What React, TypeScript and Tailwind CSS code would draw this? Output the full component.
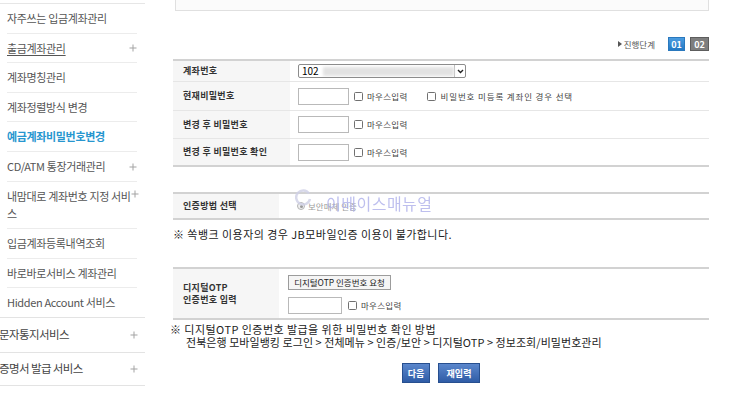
// 예금계좌비밀번호변경 — account password change screen
import React from 'react'

type MenuItem = {
  label: string[]
  h: string
  plus?: boolean
  active?: boolean
  underline?: boolean
}

const SUB_MENU: MenuItem[] = [
  { label: ['자주쓰는 입금계좌관리'], h: 'h-[30px]' },
  { label: ['출금계좌관리'], h: 'h-[29px]', plus: true, underline: true },
  { label: ['계좌명칭관리'], h: 'h-[30px]' },
  { label: ['계좌정렬방식 변경'], h: 'h-[29px]' },
  { label: ['예금계좌비밀번호변경'], h: 'h-[30px]', active: true },
  { label: ['CD/ATM 통장거래관리'], h: 'h-[30px]', plus: true },
  { label: ['내맘대로 계좌번호 지정 서비', '스'], h: 'h-[47px]', plus: true },
  { label: ['입금계좌등록내역조회'], h: 'h-[30px]' },
  { label: ['바로바로서비스 계좌관리'], h: 'h-[29px]' },
  { label: ['Hidden Account 서비스'], h: 'h-[29px]' },
]

const FONT = "font-['Noto_Sans_CJK_KR','Noto_Sans',sans-serif]"

function Plus() {
  return (
    <svg width="8" height="8" viewBox="0 0 8 8" className="shrink-0">
      <path d="M4 0.5v7M0.5 4h7" stroke="#a3a3a3" strokeWidth="1" />
    </svg>
  )
}

function Check() {
  return <span className="w-[9px] h-[9px] border border-[#707070] rounded-[1.5px] bg-white shrink-0" />
}

function MouseInput() {
  return (
    <div className="flex items-center gap-[4px]">
      <Check />
      <span className="text-[8.5px] text-[#444] leading-none tracking-[0.3px]">마우스입력</span>
    </div>
  )
}

function PwInput({ w = 'w-[51px]' }: { w?: string }) {
  return <div className={`${w} h-[17px] border border-[#b9b9b9] bg-white shrink-0`} />
}

function Sidebar() {
  return (
    <div className="w-[145px] shrink-0 pt-[3px]">
      <div className="border-t border-[#e6e6e6]">
        {SUB_MENU.map((m, i) => {
          const last = i === SUB_MENU.length - 1
          return (
            <div key={i} className={last ? 'border-b border-[#e3e3e3]' : ''}>
              <div
                className={`ml-[7px] mr-[8px] ${m.h} flex justify-between ${m.label.length > 1 ? 'items-start' : 'items-center'} ${last ? '' : 'border-b border-[#ececec]'}`}
              >
                <div
                  className={`text-[11px] leading-[17px] tracking-[-0.35px] ${m.label.length > 1 ? 'pt-[6px]' : ''} ${
                    m.active ? 'text-[#2796cf] font-semibold tracking-[-0.6px]' : 'text-[#555]'
                  } ${m.underline ? 'underline underline-offset-2' : ''}`}
                >
                  {m.label.map((l, j) => (
                    <div key={j} className="whitespace-nowrap">{l}</div>
                  ))}
                </div>
                {m.plus && (
                  <div className={m.label.length > 1 ? 'mt-[8px] -mr-px' : ''}>
                    <Plus />
                  </div>
                )}
              </div>
            </div>
          )
        })}
        <div className="h-[35px] flex items-center justify-between pr-[7px] border-b border-[#e3e3e3]">
          <span className="-ml-[1px] text-[11.5px] tracking-[-0.6px] text-[#444]">문자통지서비스</span>
          <Plus />
        </div>
        <div className="h-[33px] flex items-center justify-between pr-[7px] border-b border-[#e3e3e3]">
          <span className="-ml-[1px] text-[11.5px] tracking-[-0.6px] text-[#444]">증명서 발급 서비스</span>
          <Plus />
        </div>
      </div>
    </div>
  )
}

function Label({ children, w }: { children: React.ReactNode; w: string }) {
  return (
    <div className={`${w} shrink-0 bg-[#f6f6f6] pl-[10px] flex items-center text-[9px] font-bold text-[#333] tracking-[0.3px] leading-[12px]`}>
      {children}
    </div>
  )
}

export default function App() {
  return (
    <div className={`relative w-[730px] h-[399px] overflow-hidden bg-white flex ${FONT}`}>
      <Sidebar />

      <div className="ml-[28px] w-[536px] shrink-0 flex flex-col">
        {/* previous box remnant */}
        <div className="ml-[2px] w-[534px] h-[11px] border-x border-b border-[#e0e0e0] bg-[#fbfbfb]" />

        {/* 진행단계 */}
        <div className="mt-[26px] h-[14px] flex items-center justify-end">
          <svg width="4" height="6" viewBox="0 0 4 6" className="mr-[2px]">
            <path d="M0 0L4 3L0 6Z" fill="#555" />
          </svg>
          <span className="text-[8.5px] text-[#555] leading-none mr-[13px]">진행단계</span>
          <div className="w-[17px] h-[14px] bg-linear-to-b from-[#4a9ce0] to-[#2379c4] border border-[#2a78bd] text-white text-[9px] font-bold flex items-center justify-center leading-none">
            01
          </div>
          <div className="ml-[5px] w-[19px] h-[14px] bg-[#7e7e7e] border border-[#5d5d5d] text-white text-[9px] font-bold flex items-center justify-center leading-none">
            02
          </div>
        </div>

        {/* 계좌 비밀번호 입력 */}
        <div className="mt-[8px] border-t-2 border-b-2 border-[#d2d2d2]">
          <div className="h-[21px] flex border-b border-[#e6e6e6]">
            <Label w="w-[117px]">계좌번호</Label>
            <div className="flex-1 pl-[8px] flex items-center">
              <div className="w-[168px] h-[14px] border border-[#8c8c8c] rounded-[2px] bg-white flex items-center overflow-hidden">
                <span className="pl-[3px] text-[10px] leading-none text-black">102</span>
                <div className="ml-[4px] h-[9px] w-[133px] bg-[#e2e2e2] blur-[1.5px]" />
                <div className="ml-auto h-full w-[11px] flex items-center justify-center border-l border-[#bbb]">
                  <svg width="7" height="5" viewBox="0 0 7 5">
                    <path d="M1 1l2.5 2.5L6 1" stroke="#222" strokeWidth="1.4" fill="none" />
                  </svg>
                </div>
              </div>
            </div>
          </div>
          <div className="h-[29px] flex border-b border-[#e6e6e6]">
            <Label w="w-[117px]">현재비밀번호</Label>
            <div className="flex-1 pl-[8px] flex items-center gap-[5px]">
              <PwInput />
              <MouseInput />
              <div className="ml-[14px] flex items-center gap-[5px]">
                <Check />
                <span className="text-[8.5px] text-[#444] leading-none tracking-[0.85px]">비밀번호 미등록 계좌인 경우 선택</span>
              </div>
            </div>
          </div>
          <div className="h-[28px] flex border-b border-[#e6e6e6]">
            <Label w="w-[117px]">변경 후 비밀번호</Label>
            <div className="flex-1 pl-[8px] flex items-center gap-[5px]">
              <PwInput />
              <MouseInput />
            </div>
          </div>
          <div className="h-[26px] flex">
            <Label w="w-[117px]">변경 후 비밀번호 확인</Label>
            <div className="flex-1 pl-[8px] flex items-center gap-[5px]">
              <PwInput />
              <MouseInput />
            </div>
          </div>
        </div>

        {/* 인증방법 */}
        <div className="mt-[25px] h-[28px] border-t-2 border-b-2 border-[#d2d2d2] flex">
          <Label w="w-[106px]">인증방법 선택</Label>
          <div className="flex-1 pl-[18px] flex items-center gap-[3px]">
            <span className="w-[8px] h-[8px] rounded-full border border-[#b5b5b5] bg-[#f0f0f0] flex items-center justify-center">
              <span className="w-[3px] h-[3px] rounded-full bg-[#9a9a9a]" />
            </span>
            <span className="text-[8.5px] text-[#9a9a9a] leading-none">보안매체 인증</span>
          </div>
        </div>

        <p className="mt-[7px] text-[11px] leading-[14px] text-[#222] tracking-[0.45px]">
          ※ 쏙뱅크 이용자의 경우 JB모바일인증 이용이 불가합니다.
        </p>

        {/* 디지털OTP */}
        <div className="mt-[26px] h-[53px] border-t-2 border-b-2 border-[#d2d2d2] flex">
          <Label w="w-[106px]">
            <div>
              <div>디지털OTP</div>
              <div>인증번호 입력</div>
            </div>
          </Label>
          <div className="flex-1 pl-[9px] pt-[6px] flex flex-col gap-[7px]">
            <div className="w-[103px] h-[15px] border border-[#9c9c9c] bg-[#f5f5f5] text-[8.5px] text-[#222] leading-none flex items-center justify-center">
              디지털OTP 인증번호 요청
            </div>
            <div className="flex items-center gap-[6px]">
              <PwInput w="w-[54px]" />
              <MouseInput />
            </div>
          </div>
        </div>

        <div className="mt-[3px] text-[11px] leading-[13px] text-[#222]">
          <p className="-ml-[3px] tracking-[0.45px] whitespace-nowrap">※ 디지털OTP 인증번호 발급을 위한 비밀번호 확인 방법</p>
          <p className="ml-[13px] tracking-[0.05px] whitespace-nowrap">
            전북은행 모바일뱅킹 로그인 &gt; 전체메뉴 &gt; 인증/보안 &gt; 디지털OTP &gt; 정보조회/비밀번호관리
          </p>
        </div>

        <div className="mt-[14px] flex justify-center gap-[8px]">
          <button className="w-[28px] h-[20px] bg-linear-to-b from-[#5b87cc] to-[#2f5ca6] border border-[#274f8f] text-white text-[9px] font-bold leading-none">
            다음
          </button>
          <button className="w-[42px] h-[20px] bg-linear-to-b from-[#5b87cc] to-[#2f5ca6] border border-[#274f8f] text-white text-[9px] font-bold leading-none">
            재입력
          </button>
        </div>
      </div>

      {/* watermark */}
      <div className="absolute left-[295px] top-[183px] flex items-center gap-[14px] pointer-events-none opacity-80">
        <svg width="17" height="17" viewBox="0 0 17 17">
          <path d="M14 4.5A7 7 0 1 0 15 10" stroke="#cfd0e6" strokeWidth="2.5" fill="none" />
        </svg>
        <span className="text-[16px] leading-none text-[#aeb0ea] mt-[12px] tracking-[0.5px]">이베이스매뉴얼</span>
      </div>
    </div>
  )
}
